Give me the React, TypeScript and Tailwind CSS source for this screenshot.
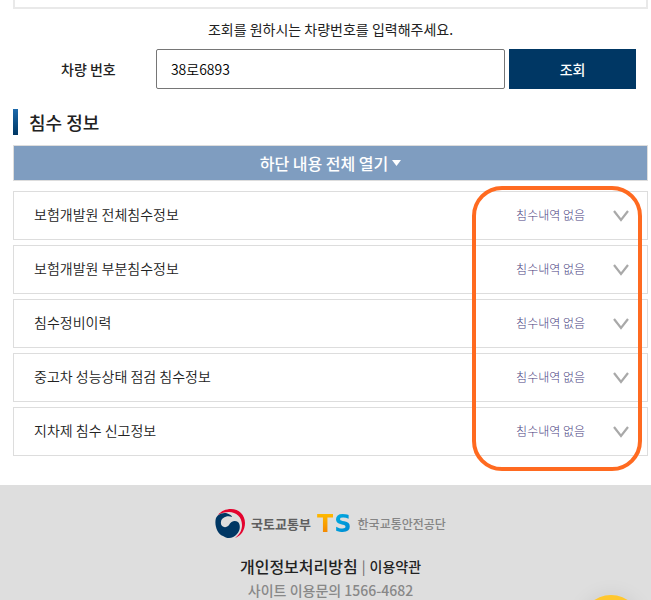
import { useId, useState } from "react";

const FLOOD_ITEMS = [
  "보험개발원 전체침수정보",
  "보험개발원 부분침수정보",
  "침수정비이력",
  "중고차 성능상태 점검 침수정보",
  "지차제 침수 신고정보",
];

function ChevronIcon() {
  return (
    <svg width="16" height="12" viewBox="0 0 16 12" fill="none" aria-hidden="true">
      <path d="M1 1 L8 10 L15 1" stroke="#a9a9a9" strokeWidth="2.2" />
    </svg>
  );
}

function SearchForm() {
  const id = useId();
  const [plate, setPlate] = useState("38로6893");
  return (
    <form className="mt-2.5 flex justify-center gap-1" onSubmit={(e) => e.preventDefault()}>
      <label htmlFor={id} className="flex h-10 w-1/5 items-center justify-center font-medium">
        차량 번호
      </label>
      <input
        id={id}
        value={plate}
        onChange={(e) => setPlate(e.target.value)}
        className="h-10 w-[55%] rounded-xs border border-[#767676] bg-white px-3.5 font-[350] text-black"
      />
      <button type="submit" className="h-10 w-1/5 bg-[#003764] font-medium text-white">
        조회
      </button>
    </form>
  );
}

function FloodRow({ title }: { title: string }) {
  return (
    <li>
      <button
        type="button"
        className="flex h-[49px] w-full items-center border border-[#dddddd] bg-white pr-[18px] pl-5 text-left"
      >
        <span className="flex-1 pb-1 font-[350]">{title}</span>
        <span className="mr-7 pb-0.5 text-xs font-light text-[#4b3f7f]">침수내역 없음</span>
        <ChevronIcon />
      </button>
    </li>
  );
}

function MinistryLogo() {
  return (
    <svg width="30" height="30" viewBox="0 0 30 30" aria-hidden="true">
      <path
        d="M3 6 C6 2 11 0 16 0 C24 0 30 6 30 14 C30 21 26 27 20 29 C25 25 27 21 27 16 C27 8 21 3 14 3 C10 3 6 4 3 6Z"
        fill="#e4032e"
      />
      <path
        d="M1 9 C3 5 7 4 11 4 C15 5 17 7 17 8 C12 6 6 9 6 13 C5 18 11 20 14 16 C16 12 20 11 23 13 C26 16 25 22 22 25 C18 30 12 30 8 27 C2 25 -1 15 1 9Z"
        fill="#003764"
      />
    </svg>
  );
}

function Footer() {
  return (
    <footer className="mt-[29px] flex flex-1 flex-col items-center bg-[#dedede] pt-6 pl-2.5">
      <div className="flex h-[30px] items-center">
        <MinistryLogo />
        <span className="ml-1.5 text-[13px] font-bold text-[#5f5f5f]">국토교통부</span>
        <span className="ml-1.5 flex font-['DejaVu_Sans'] text-2xl leading-7 font-bold">
          <span className="bg-linear-to-b from-[#ffc400] to-[#f07800] bg-clip-text text-transparent">T</span>
          <span className="ml-px bg-linear-to-br from-[#00b4e6] to-[#0080cc] bg-clip-text text-transparent">S</span>
        </span>
        <span className="ml-1.5 text-xs font-medium text-[#858585]">한국교통안전공단</span>
      </div>
      <p className="mt-[15px] flex items-center gap-1 leading-6">
        <a href="#privacy" className="text-base leading-6 font-medium">
          개인정보처리방침
        </a>
        <span className="text-[#666666]">|</span>
        <a href="#terms" className="font-medium">
          이용약관
        </a>
      </p>
      <p className="mt-1 leading-4 font-medium text-[#888888]">사이트 이용문의 1566-4682</p>
    </footer>
  );
}

export default function App() {
  return (
    <div className="flex min-h-screen flex-col bg-white font-['Noto_Sans_CJK_KR',sans-serif] text-sm text-[#222222]">
      <main className="pr-[3px] pl-[13px]">
        <div className="h-[9px] border-2 border-t-0 border-[#e9e9e9]" />
        <p className="mt-2.5 text-center leading-5">조회를 원하시는 차량번호를 입력해주세요.</p>
        <SearchForm />
        <div className="mt-5 flex h-[26px] items-center gap-[11px]">
          <span className="h-full w-[5px] bg-linear-to-b from-[#1d6aac] to-[#003764]" />
          <h2 className="text-lg leading-6 font-medium">침수 정보</h2>
        </div>
        <button
          type="button"
          className="mt-2.5 flex h-9 w-full items-center justify-center gap-1 border border-[#dddddd] bg-[#7f9dc0] text-base font-medium text-white"
        >
          하단 내용 전체 열기
          <svg width="9" height="6" viewBox="0 0 9 6" fill="currentColor" aria-hidden="true">
            <path d="M0 0 H9 L4.5 6Z" />
          </svg>
        </button>
        <div className="relative mt-2.5">
          <ul className="flex flex-col gap-[5px]">
            {FLOOD_ITEMS.map((title) => (
              <FloodRow key={title} title={title} />
            ))}
          </ul>
          <div className="pointer-events-none absolute -top-[5px] right-1.5 -bottom-[15px] w-[170px] rounded-[30px] border-4 border-[#ff6a20]" />
        </div>
      </main>
      <Footer />
      <button
        type="button"
        aria-label="챗봇 상담"
        className="fixed right-2.5 -bottom-[55px] size-[60px] rounded-full bg-[#ffc72e] shadow-[0_0_20px_rgba(0,0,0,0.08)]"
      />
    </div>
  );
}
